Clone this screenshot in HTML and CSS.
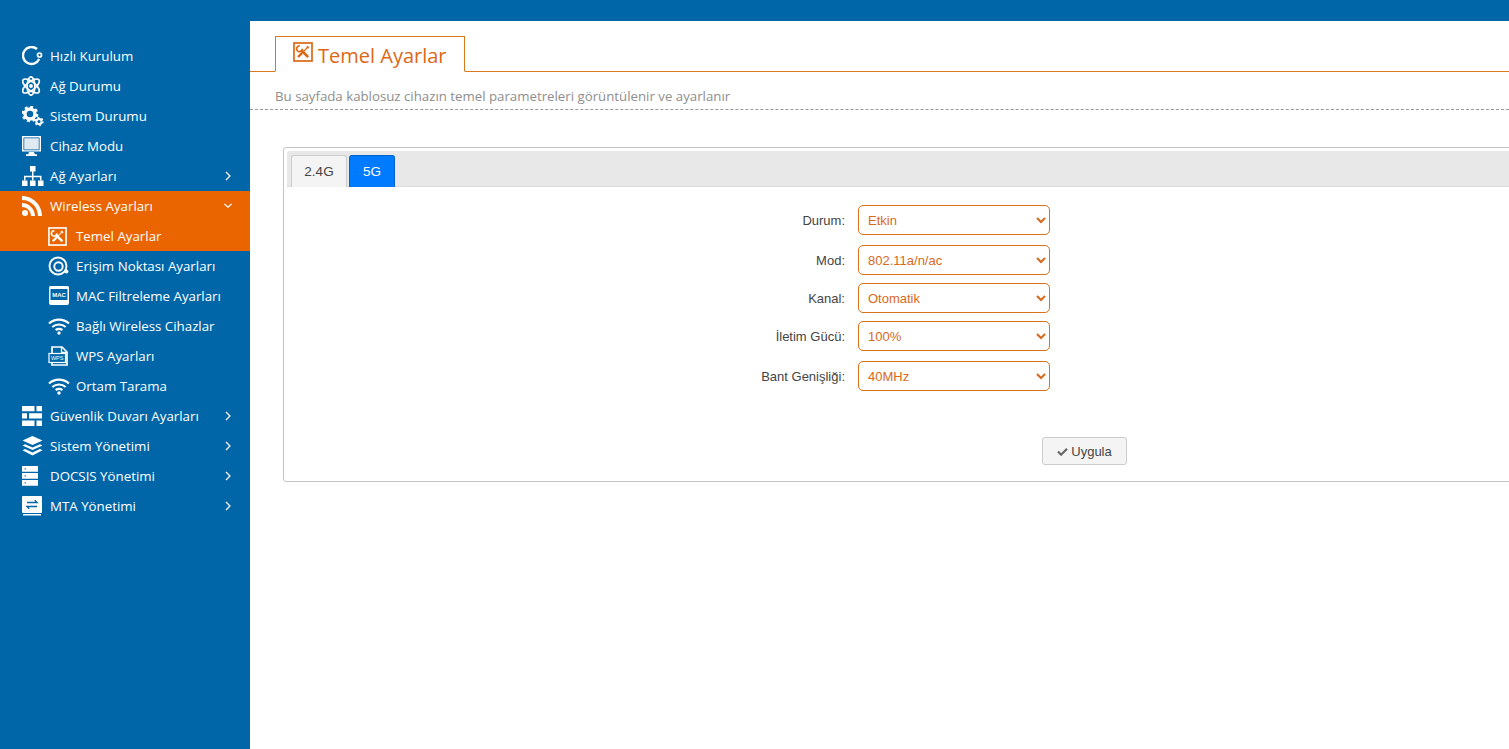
FILE: index.html
```html
<!DOCTYPE html>
<html lang="tr">
<head>
<meta charset="utf-8">
<title>Temel Ayarlar</title>
<link rel="stylesheet" href="styles.css">
</head>
<body>
<svg class="defs" aria-hidden="true" width="0" height="0">
  <symbol id="i-tools" viewBox="0 0 20 20">
    <rect x="1" y="1" width="18" height="18" fill="none" stroke="currentColor" stroke-width="1.700"/>
    <g fill="none" stroke="currentColor">
      <path d="M6.800 3.900A2.900 2.900 0 1 0 9.400 6.700" stroke-width="1.700"/>
      <path d="M8 8l7.200 7.200" stroke-width="2.600"/>
      <path d="M15 5L5.500 14.500" stroke-width="1.100"/>
      <path d="M9 11l-4 4" stroke-width="2.400"/>
      <path d="M13.800 4.300l1.900 1.900" stroke-width="1.800"/>
    </g>
  </symbol>
  <symbol id="i-wifi" viewBox="0 0 22 18">
    <path d="M1 6.500C6.700 1.300 15.300 1.300 21 6.500M4.300 10C8.200 6.600 13.800 6.600 17.700 10M7.600 13C9.600 11.700 12.400 11.700 14.400 13" fill="none" stroke="currentColor" stroke-width="2.100"/>
    <circle cx="11" cy="16" r="1.700" fill="currentColor"/>
  </symbol>
  <symbol id="i-right" viewBox="0 0 8 10">
    <path d="M2 1l4 4-4 4" fill="none" stroke="currentColor" stroke-width="1.200"/>
  </symbol>
  <symbol id="i-down" viewBox="0 0 10 8">
    <path d="M1.500 2l3.500 3.200L8.500 2" fill="none" stroke="currentColor" stroke-width="1.200"/>
  </symbol>
</svg>

<header class="topbar"></header>

<div class="layout">
  <nav class="sidebar">
    <ul class="menu">
      <li class="item">
        <svg class="ico" viewBox="0 0 22 20"><path d="M15 3A8.500 8.500 0 1 0 17.200 13.100" fill="none" stroke="currentColor" stroke-width="2.400"/><circle cx="17.500" cy="9" r="2" fill="none" stroke="currentColor" stroke-width="1.700"/></svg>
        <span class="label">Hızlı Kurulum</span>
      </li>
      <li class="item">
        <svg class="ico" viewBox="0 0 22 20"><g fill="none" stroke="currentColor" stroke-width="1.700" transform="translate(-1.500 0)"><ellipse cx="10.500" cy="10" rx="10" ry="4.200" transform="rotate(38 10.500 10)"/><ellipse cx="10.500" cy="10" rx="10" ry="4.200" transform="rotate(-38 10.500 10)"/><ellipse cx="10.500" cy="10" rx="3.800" ry="9.200"/></g><circle cx="9" cy="10" r="1.900" fill="currentColor"/></svg>
        <span class="label">Ağ Durumu</span>
      </li>
      <li class="item">
        <svg class="ico" viewBox="0 0 22 20"><circle cx="8" cy="8" r="5" fill="none" stroke="currentColor" stroke-width="3.400"/><circle cx="8" cy="8" r="7.300" fill="none" stroke="currentColor" stroke-width="2" stroke-dasharray="3 2.730"/><circle cx="17" cy="15.500" r="2.600" fill="none" stroke="currentColor" stroke-width="2"/><circle cx="17" cy="15.500" r="4" fill="none" stroke="currentColor" stroke-width="1.400" stroke-dasharray="2 2.190"/></svg>
        <span class="label">Sistem Durumu</span>
      </li>
      <li class="item">
        <svg class="ico" viewBox="0 0 22 20"><path d="M0 0h19v15.500H0z" fill="currentColor"/><path d="M1.800 1.800h15.400v12H1.800z" fill="#dfeaf3" stroke="#0066a8" stroke-width=".8"/><path d="M7 16h5l.8 2.200H15V20H4v-1.800h2.200z" fill="currentColor"/></svg>
        <span class="label">Cihaz Modu</span>
      </li>
      <li class="item">
        <svg class="ico" viewBox="0 0 22 20"><path d="M8 0h5.500v5.500H8zM0 14.500h5.500V20H0zM8 14.500h5.500V20H8zM16 14.500h5.500V20H16z" fill="currentColor"/><path d="M10.750 5v9.500M2.750 14.500v-4h16v4" fill="none" stroke="currentColor" stroke-width="1.500"/></svg>
        <span class="label">Ağ Ayarları</span>
        <svg class="chev"><use href="#i-right"/></svg>
      </li>
      <li class="item active">
        <svg class="ico" viewBox="0 0 22 20"><path d="M0 0c11 0 20 9 20 20h-4C16 11 9 4 0 4zM0 7c7 0 13 6 13 13H9c0-5-4-9-9-9z" fill="currentColor"/><circle cx="3" cy="17" r="3" fill="currentColor"/></svg>
        <span class="label">Wireless Ayarları</span>
        <svg class="chev chev-down"><use href="#i-down"/></svg>
      </li>
      <li class="item sub active">
        <svg class="ico ico-tools"><use href="#i-tools"/></svg>
        <span class="label">Temel Ayarlar</span>
      </li>
      <li class="item sub">
        <svg class="ico" viewBox="0 0 22 20"><circle cx="10" cy="10" r="8.500" fill="none" stroke="currentColor" stroke-width="1.900"/><circle cx="10.500" cy="10.500" r="4.200" fill="none" stroke="currentColor" stroke-width="1.900"/><circle cx="18.500" cy="15.500" r="1.900" fill="currentColor"/></svg>
        <span class="label">Erişim Noktası Ayarları</span>
      </li>
      <li class="item sub">
        <svg class="ico" viewBox="0 0 22 20"><path d="M1 1.500Q1 0 2.500 0h17Q21 0 21 1.500V17q0 2-2 2H3q-2 0-2-2z" fill="currentColor"/><rect x="2.500" y="3" width="17" height="11" fill="#0066a8"/><text class="mini" x="11" y="11.200">MAC</text></svg>
        <span class="label">MAC Filtreleme Ayarları</span>
      </li>
      <li class="item sub">
        <svg class="ico"><use href="#i-wifi"/></svg>
        <span class="label">Bağlı Wireless Cihazlar</span>
      </li>
      <li class="item sub">
        <svg class="ico" viewBox="0 0 22 20"><path d="M4 7V1h10l5 5v13H4v-2" fill="none" stroke="currentColor" stroke-width="1.700"/><path d="M13.500 1v5.500H19" fill="none" stroke="currentColor" stroke-width="1.300"/><rect x="1" y="7.500" width="16.500" height="9" fill="#0066a8" stroke="currentColor" stroke-width="1.200"/><text class="mini mini-wps" x="9.200" y="14">WPS</text></svg>
        <span class="label">WPS Ayarları</span>
      </li>
      <li class="item sub">
        <svg class="ico"><use href="#i-wifi"/></svg>
        <span class="label">Ortam Tarama</span>
      </li>
      <li class="item">
        <svg class="ico" viewBox="0 0 22 20"><path d="M0 0h12.500v5.200H0zM14.500 0H20v5.200h-5.500zM0 7.300h5v5.200H0zM7 7.300h13v5.200H7zM0 14.500h12.500V20H0zM14.500 14.500H20V20h-5.500z" fill="currentColor"/></svg>
        <span class="label">Güvenlik Duvarı Ayarları</span>
        <svg class="chev"><use href="#i-right"/></svg>
      </li>
      <li class="item">
        <svg class="ico" viewBox="0 0 22 20"><path d="M10.500 0l10 4.500-10 4.500-10-4.500z" fill="currentColor"/><path d="M3 8.200l7.500 3.400L18 8.200l2.500 1.200-10 4.600-10-4.600z" fill="currentColor"/><path d="M3 13l7.500 3.400L18 13l2.500 1.200-10 5.300-10-5.300z" fill="currentColor"/></svg>
        <span class="label">Sistem Yönetimi</span>
        <svg class="chev"><use href="#i-right"/></svg>
      </li>
      <li class="item">
        <svg class="ico" viewBox="0 0 22 20"><path d="M0 0h16v5.800H0zM0 7h16v5.800H0zM0 14h16v5.800H0z" fill="currentColor"/><path d="M2.500 2.900h1.500M2.500 9.900h1.500M2.500 16.900h1.500" stroke="#0066a8" stroke-width="1"/></svg>
        <span class="label">DOCSIS Yönetimi</span>
        <svg class="chev"><use href="#i-right"/></svg>
      </li>
      <li class="item">
        <svg class="ico" viewBox="0 0 22 20"><path d="M0 1q0-1 1-1h18q1 0 1 1v15q0 1-1 1H1q-1 0-1-1z" fill="currentColor"/><path d="M1 18h18v1.500H1z" fill="currentColor"/><path d="M5 6.500h10l-2.200-2.200M15 10.500H5l2.200 2.200" fill="none" stroke="#0066a8" stroke-width="1.400"/></svg>
        <span class="label">MTA Yönetimi</span>
        <svg class="chev"><use href="#i-right"/></svg>
      </li>
    </ul>
  </nav>

  <main class="content">
    <div class="page-head">
      <h1 class="page-tab"><svg class="page-ico"><use href="#i-tools"/></svg>Temel Ayarlar</h1>
    </div>
    <p class="subtitle">Bu sayfada kablosuz cihazın temel parametreleri görüntülenir ve ayarlanır</p>

    <section class="panel">
      <div class="tabs">
        <a class="tab">2.4G</a>
        <a class="tab tab-on">5G</a>
      </div>
      <form class="form">
        <div class="row">
          <label class="field-label" for="f1">Durum:</label>
          <select class="field" id="f1"><option>Etkin</option></select>
        </div>
        <div class="row row-tight">
          <label class="field-label" for="f2">Mod:</label>
          <select class="field" id="f2"><option>802.11a/n/ac</option></select>
        </div>
        <div class="row row-tight">
          <label class="field-label" for="f3">Kanal:</label>
          <select class="field" id="f3"><option>Otomatik</option></select>
        </div>
        <div class="row">
          <label class="field-label" for="f4">İletim Gücü:</label>
          <select class="field" id="f4"><option>100%</option></select>
        </div>
        <div class="row">
          <label class="field-label" for="f5">Bant Genişliği:</label>
          <select class="field" id="f5"><option>40MHz</option></select>
        </div>
        <div class="actions">
          <button class="apply" type="button"><svg class="check" viewBox="0 0 12 10"><path d="M1 5l3.500 3.500L11 2" fill="none" stroke="currentColor" stroke-width="2.400"/></svg>Uygula</button>
        </div>
      </form>
    </section>
  </main>
</div>
</body>
</html>
```

FILE: styles.css
```css
* { box-sizing: border-box; }
html, body { height: 100%; }
body {
  margin: 0;
  overflow: hidden;
  background: #fff;
  font-family: "Liberation Sans", Arial, sans-serif;
  font-size: 13px;
  color: #333;
}
.defs { position: absolute; }

.topbar { height: 21px; background: #0066a8; }
.layout { display: flex; height: 728px; }

.sidebar {
  flex: 0 0 250px;
  background: #0066a8;
  padding-top: 20px;
  color: #fff;
  font-family: "Open Sans", sans-serif;
  font-size: 13.300px;
}
.menu { list-style: none; margin: 0; padding: 0; }
.item {
  display: flex;
  align-items: center;
  height: 30px;
  padding-left: 22px;
  padding-right: 18px;
}
.item.active { background: #ea6500; }
.sub { padding-left: 48px; }
.ico { flex: 0 0 auto; width: 22px; height: 20px; margin-right: 6px; color: #fff; }
.ico-tools { width: 19px; height: 19px; margin-right: 9px; }
.label { flex: 1 1 auto; white-space: nowrap; }
.chev { flex: 0 0 auto; width: 8px; height: 10px; }
.chev-down { width: 10px; height: 8px; margin-right: -1px; }
.mini {
  font-family: "Liberation Sans", sans-serif;
  font-size: 6px;
  font-weight: 700;
  fill: #fff;
  text-anchor: middle;
}
.mini-wps { font-size: 5.500px; font-weight: 400; }

.content { flex: 1 1 auto; min-width: 0; overflow: hidden; }
.page-head {
  height: 51px;
  padding: 15px 0 0 25px;
  border-bottom: 1px solid #d97a1e;
}
.page-tab {
  display: flex;
  align-items: center;
  width: 190px;
  height: 36px;
  margin: 0;
  padding: 2px 0 0 17px;
  background: #fff;
  border: 1px solid #d97a1e;
  border-bottom-color: #fff;
  color: #dc6816;
  font-family: "Open Sans", sans-serif;
  font-size: 20px;
  font-weight: 400;
}
.page-ico { width: 20px; height: 20px; margin-right: 5px; margin-top: -7px; }
.subtitle {
  margin: 0;
  height: 38px;
  padding: 16px 0 0 25px;
  border-bottom: 1px dashed #999;
  color: #8e8e8e;
  font-family: "Open Sans", sans-serif;
  font-size: 13.250px;
  line-height: 17px;
}

.panel {
  width: 1400px;
  height: 335px;
  margin: 37px 0 0 33px;
  padding: 3px;
  border: 1px solid #c4c4c4;
  border-radius: 3px;
}
.tabs {
  display: flex;
  gap: 2px;
  height: 36px;
  padding: 4px 0 0 4px;
  background: #e8e8e8;
  border-bottom: 1px solid #ddd;
  border-radius: 3px 3px 0 0;
}
.tab {
  width: 56px;
  height: 32px;
  padding-top: 8px;
  text-align: center;
  background: #f4f4f4;
  border: 1px solid #ccc;
  border-bottom: 0;
  border-radius: 3px 3px 0 0;
  color: #444;
  font-size: 13.500px;
  line-height: 16px;
}
.tab-on {
  width: 46px;
  background: #007bff;
  border-color: #0062cc;
  color: #fff;
}

.form { padding-top: 18px; }
.row {
  display: flex;
  align-items: center;
  height: 30px;
  margin-bottom: 10px;
}
.row-tight { margin-bottom: 8px; }
.field-label {
  width: 571px;
  padding-right: 13px;
  text-align: right;
  color: #444;
  font-size: 13px;
}
.field {
  width: 192px;
  height: 30px;
  padding: 0 5px;
  background: #fff;
  border: 1px solid #d9701a;
  border-radius: 5px;
  color: #d9691c;
  font-family: "Liberation Sans", Arial, sans-serif;
  font-size: 13px;
}
.actions { padding: 36px 0 0 755px; }
.apply {
  display: flex;
  align-items: center;
  justify-content: center;
  width: 85px;
  height: 28px;
  padding: 0;
  background: #f4f4f4;
  border: 1px solid #ccc;
  border-radius: 3px;
  color: #444;
  font-family: "Liberation Sans", Arial, sans-serif;
  font-size: 13px;
}
.check { width: 11px; height: 9px; margin-right: 3px; color: #666; }
```
